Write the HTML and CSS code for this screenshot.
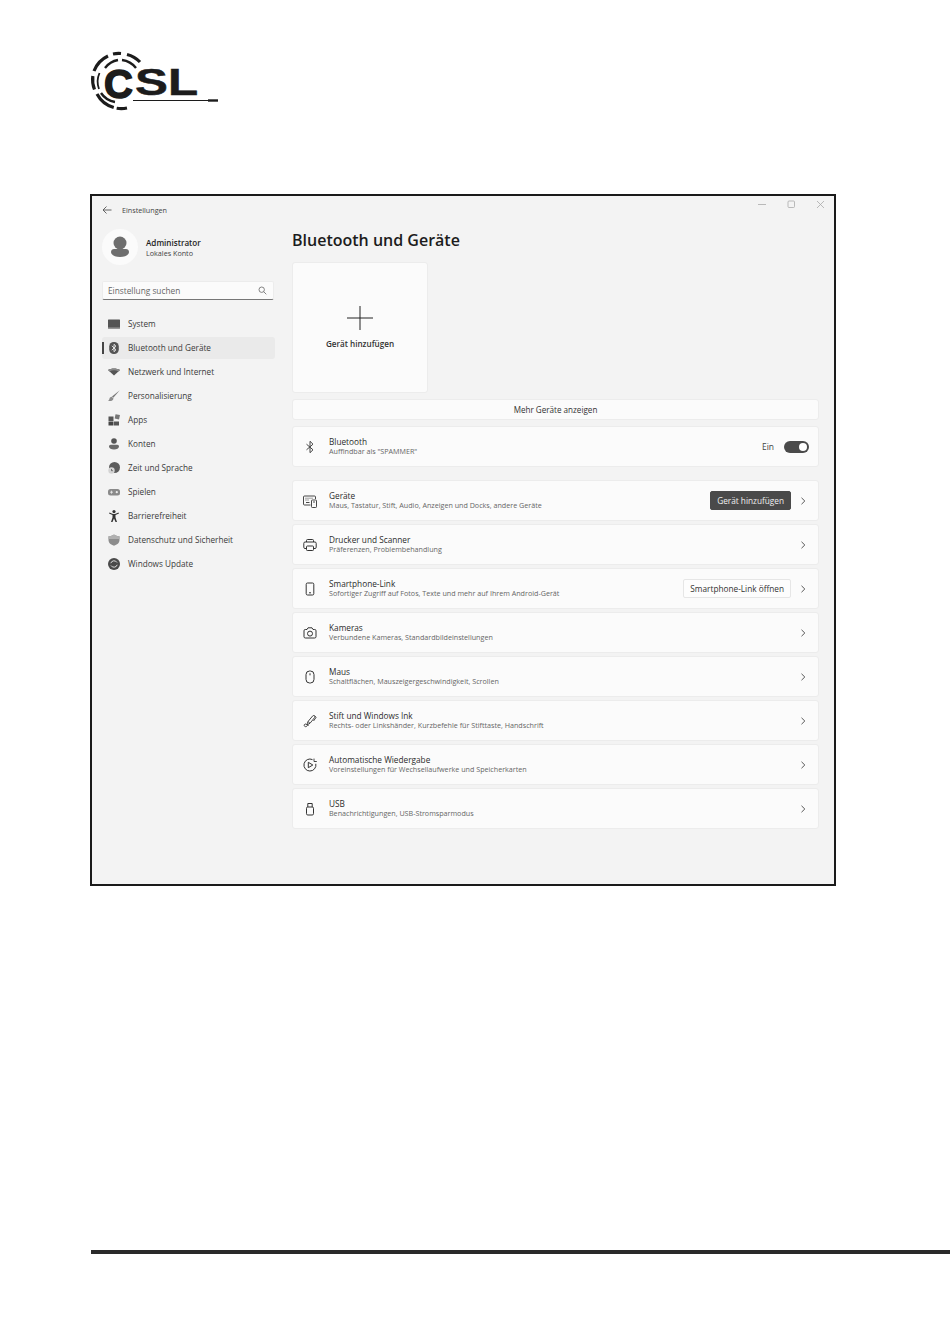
FILE: index.html
```html
<!DOCTYPE html>
<html lang="de">
<head>
<meta charset="UTF-8" />
<meta name="viewport" content="width=device-width, initial-scale=1.0"/>
<title>Bluetooth und Geräte</title>
<link rel="stylesheet" href="styles.css">
</head>

<body>
<div class="page">

  <!-- CSL logo -->
  <svg class="logo" width="130" height="64" viewBox="0 0 130 64">
    <g fill="none" stroke="#1c1c1c">
      <path d="M4.500 40.500A27.500 27.500 0 0 1 2.800 27" stroke-width="3.200"/>
      <path d="M4 22A27.500 27.500 0 0 1 18 7" stroke-width="3.200"/>
      <path d="M23 5A27.500 27.500 0 0 1 31 4.500" stroke-width="3.200"/>
      <path d="M37 5.500A27.500 27.500 0 0 1 50 13" stroke-width="3.200"/>
      <path d="M7 45A27.500 27.500 0 0 0 37 59" stroke-width="3.200" stroke-dasharray="22 3 18 0"/>
      <path d="M15 19A21 21 0 0 1 28 11" stroke-width="2.400"/>
      <path d="M32 11A21 21 0 0 1 46 19" stroke-width="2.400"/>
      <path d="M9 40A21 21 0 0 1 9.500 24" stroke-width="1.800"/>
      <path d="M11 44A21 21 0 0 0 25 53" stroke-width="2.400"/>
    </g>
    <text class="logo-c" x="14" y="48.500">C</text>
    <text class="logo-sl" x="45" y="46" textLength="63" lengthAdjust="spacingAndGlyphs">SL</text>
    <path d="M43 51.500H118" stroke="#1c1c1c" stroke-width="1"/>
    <path d="M118 51.500H128" stroke="#1c1c1c" stroke-width="2.400"/>
  </svg>

  <div class="window">

    <div class="sidebar">
      <div class="appbar">
        <svg width="10" height="10" viewBox="0 0 10 10" class="back"><path d="M9.500 5H1M4.500 1.500 1 5l3.500 3.500" fill="none" stroke="#555" stroke-width="0.900"/></svg>
        <span>Einstellungen</span>
      </div>

      <div class="profile">
        <div class="avatar">
          <svg width="36" height="36" viewBox="0 0 36 36"><circle cx="18" cy="14" r="6.500" fill="#6e6e6e"/><path d="M9 23c0-2 1.500-3 3-3h12c1.500 0 3 1 3 3 0 3-4 5-9 5s-9-2-9-5z" fill="#6e6e6e"/></svg>
        </div>
        <div>
          <div class="profile-name">Administrator</div>
          <div class="profile-sub">Lokales Konto</div>
        </div>
      </div>

      <div class="search">
        <span>Einstellung suchen</span>
        <svg width="9" height="9" viewBox="0 0 9 9"><circle cx="3.700" cy="3.700" r="2.700" fill="none" stroke="#666" stroke-width="0.800"/><path d="M5.700 5.700 8.300 8.300" stroke="#666" stroke-width="0.800"/></svg>
      </div>

      <div class="nav">
        <div class="nav-item">
          <svg width="14" height="14" viewBox="0 0 14 14"><rect x="1" y="2.500" width="12" height="9" rx="0.500" fill="#555"/><rect x="1" y="10.300" width="12" height="1.200" fill="#8a8a8a"/></svg>
          System
        </div>
        <div class="nav-item active">
          <svg width="14" height="14" viewBox="0 0 14 14"><rect x="2.200" y="1" width="9.600" height="12" rx="4.500" fill="#555"/><path d="M4.800 4.800 9 8.800 7 10.700V3.300L9 5.200 4.800 9.200" fill="none" stroke="#fff" stroke-width="0.800"/></svg>
          Bluetooth und Geräte
        </div>
        <div class="nav-item">
          <svg width="14" height="14" viewBox="0 0 14 14"><path d="M1 5C4.500 3 9.500 3 13 5L7 10.500z" fill="#555"/><path d="M1 5C4.500 3 9.500 3 13 5L11.500 6.400C8.700 4.800 5.300 4.800 2.500 6.400z" fill="#8a8a8a"/></svg>
          Netzwerk und Internet
        </div>
        <div class="nav-item">
          <svg width="14" height="14" viewBox="0 0 14 14"><path d="M12.800 1.200 5 7.500l1.300 1.300z" fill="#777"/><path d="M4.800 7.800c-1.600 0-2.200 1-2.400 2.200-.1.800-.8 1.500-1.400 1.700 2.200.8 5 .3 5.500-2.300z" fill="#8c8c8c"/></svg>
          Personalisierung
        </div>
        <div class="nav-item">
          <svg width="14" height="14" viewBox="0 0 14 14"><rect x="1.500" y="3.500" width="5" height="4.500" fill="#555"/><rect x="1.500" y="8.500" width="5" height="4" fill="#444"/><rect x="7" y="8.500" width="5" height="4" fill="#555"/><rect x="8" y="1.500" width="4.500" height="4.500" transform="rotate(12 10 4)" fill="#777"/></svg>
          Apps
        </div>
        <div class="nav-item">
          <svg width="14" height="14" viewBox="0 0 14 14"><circle cx="7" cy="4" r="2.800" fill="#555"/><path d="M2 9.500c0-1 .8-1.700 1.700-1.700h6.600c.9 0 1.700.7 1.700 1.700 0 2-2.300 3-5 3s-5-1-5-3z" fill="#6a6a6a"/></svg>
          Konten
        </div>
        <div class="nav-item">
          <svg width="14" height="14" viewBox="0 0 14 14"><circle cx="7.500" cy="6.500" r="5.500" fill="#5c5c5c"/><circle cx="4.500" cy="9.500" r="3.200" fill="#d4d4d4"/><path d="M4.500 8v1.700h1.400" fill="none" stroke="#444" stroke-width="0.700"/></svg>
          Zeit und Sprache
        </div>
        <div class="nav-item">
          <svg width="14" height="14" viewBox="0 0 14 14"><rect x="1" y="4" width="12" height="6.500" rx="2.500" fill="#8a8a8a"/><circle cx="9.800" cy="7.200" r="1.100" fill="#eee"/><path d="M3 7.200h3M4.500 5.700v3" stroke="#eee" stroke-width="0.800"/></svg>
          Spielen
        </div>
        <div class="nav-item">
          <svg width="14" height="14" viewBox="0 0 14 14"><circle cx="7" cy="2.600" r="1.600" fill="#333"/><path d="M2 4.500 5.500 6v2.500L4 13h1.500L7 9.500 8.500 13H10L8.500 8.500V6L12 4.500l-.5-1L8 5H6L2.500 3.500z" fill="#333"/></svg>
          Barrierefreiheit
        </div>
        <div class="nav-item">
          <svg width="14" height="14" viewBox="0 0 14 14"><path d="M7 1.500c1.500 1.200 3.500 1.800 5.500 1.800V7c0 3-2.500 4.800-5.500 5.700C4 11.800 1.500 10 1.500 7V3.300C3.500 3.300 5.500 2.700 7 1.500z" fill="#8c8c8c"/><path d="M7 1.500c1.500 1.200 3.500 1.800 5.500 1.800V6h-11V3.300C3.500 3.300 5.500 2.700 7 1.500z" fill="#b0b0b0"/></svg>
          Datenschutz und Sicherheit
        </div>
        <div class="nav-item">
          <svg width="14" height="14" viewBox="0 0 14 14"><circle cx="7" cy="7" r="6" fill="#4a4a4a"/><path d="M3.800 6.200A3.400 3.400 0 0 1 10 5.500M10.200 7.800A3.400 3.400 0 0 1 4 8.500" fill="none" stroke="#ddd" stroke-width="1"/></svg>
          Windows Update
        </div>
      </div>
    </div>

    <div class="main">
      <div class="controls">
        <svg width="9" height="9" viewBox="0 0 9 9"><path d="M0 4.500h8" stroke="#aaa" stroke-width="0.800"/></svg>
        <svg width="9" height="9" viewBox="0 0 9 9"><rect x="1" y="1" width="6.500" height="6.500" rx="1" fill="none" stroke="#aaa" stroke-width="0.800"/></svg>
        <svg width="9" height="9" viewBox="0 0 9 9"><path d="M1 1l7 7M8 1 1 8" stroke="#aaa" stroke-width="0.800"/></svg>
      </div>

      <h1>Bluetooth und Geräte</h1>

      <div class="add-card">
        <svg width="26" height="24" viewBox="0 0 26 24"><path d="M0 12h26M13 0v24" stroke="#222" stroke-width="1"/></svg>
        <div class="add-label">Gerät hinzufügen</div>
      </div>

      <div class="more">Mehr Geräte anzeigen</div>

      <div class="row row-bt">
        <svg class="row-icon" width="14" height="14" viewBox="0 0 14 14"><path d="M3.500 4.200 10 9.800 7 12.700V1.300L10 4.200 3.500 9.800" fill="none" stroke="#333" stroke-width="0.900"/></svg>
        <div class="row-text">
          <div class="row-title">Bluetooth</div>
          <div class="row-sub">Auffindbar als "SPAMMER"</div>
        </div>
        <span class="toggle-label">Ein</span>
        <div class="toggle"><div class="knob"></div></div>
      </div>

      <div class="list">
        <div class="row">
          <svg class="row-icon" width="14" height="14" viewBox="0 0 14 14" fill="none" stroke="#333" stroke-width="0.900"><path d="M7.500 11H1.500a1 1 0 0 1-1-1V3a1 1 0 0 1 1-1h10a1 1 0 0 1 1 1v2"/><rect x="8.500" y="6" width="5" height="7.500" rx="0.800"/><path d="M2.500 4.200h7" stroke-dasharray="1 1"/><path d="M2.500 6h4" stroke-dasharray="1 1"/><path d="M3 8.500h3.500"/><path d="M10 8h2M11 10.500v.1"/></svg>
          <div class="row-text">
            <div class="row-title">Geräte</div>
            <div class="row-sub">Maus, Tastatur, Stift, Audio, Anzeigen und Docks, andere Geräte</div>
          </div>
          <div class="btn btn-dark">Gerät hinzufügen</div>
          <svg class="chev" width="6" height="8" viewBox="0 0 6 8"><path d="M1.500 .8 4.800 4 1.500 7.200" fill="none" stroke="#444" stroke-width="0.900"/></svg>
        </div>

        <div class="row">
          <svg class="row-icon" width="14" height="14" viewBox="0 0 14 14" fill="none" stroke="#333" stroke-width="1"><path d="M3.500 4V2.500a1 1 0 0 1 1-1h5a1 1 0 0 1 1 1V4"/><path d="M3.500 10.500H2A1.200 1.200 0 0 1 .8 9.300V5.300A1.300 1.300 0 0 1 2 4h10a1.300 1.300 0 0 1 1.200 1.300v4a1.200 1.200 0 0 1-1.200 1.200h-1.500"/><rect x="3.500" y="8" width="7" height="4.500" rx="0.800"/></svg>
          <div class="row-text">
            <div class="row-title">Drucker und Scanner</div>
            <div class="row-sub">Präferenzen, Problembehandlung</div>
          </div>
          <svg class="chev" width="6" height="8" viewBox="0 0 6 8"><path d="M1.500 .8 4.800 4 1.500 7.200" fill="none" stroke="#444" stroke-width="0.900"/></svg>
        </div>

        <div class="row">
          <svg class="row-icon" width="14" height="14" viewBox="0 0 14 14" fill="none" stroke="#333" stroke-width="1"><rect x="3.200" y="1" width="7.600" height="12" rx="1.300"/><path d="M6 10.800h2"/></svg>
          <div class="row-text">
            <div class="row-title">Smartphone-Link</div>
            <div class="row-sub">Sofortiger Zugriff auf Fotos, Texte und mehr auf Ihrem Android-Gerät</div>
          </div>
          <div class="btn">Smartphone-Link öffnen</div>
          <svg class="chev" width="6" height="8" viewBox="0 0 6 8"><path d="M1.500 .8 4.800 4 1.500 7.200" fill="none" stroke="#444" stroke-width="0.900"/></svg>
        </div>

        <div class="row">
          <svg class="row-icon" width="14" height="14" viewBox="0 0 14 14" fill="none" stroke="#333" stroke-width="1"><path d="M1 4.800A1.300 1.300 0 0 1 2.300 3.500H4L5 1.800h4L10 3.500h1.700A1.300 1.300 0 0 1 13 4.800v6A1.300 1.300 0 0 1 11.700 12H2.300A1.300 1.300 0 0 1 1 10.800z"/><circle cx="7" cy="7.600" r="2.500"/></svg>
          <div class="row-text">
            <div class="row-title">Kameras</div>
            <div class="row-sub">Verbundene Kameras, Standardbildeinstellungen</div>
          </div>
          <svg class="chev" width="6" height="8" viewBox="0 0 6 8"><path d="M1.500 .8 4.800 4 1.500 7.200" fill="none" stroke="#444" stroke-width="0.900"/></svg>
        </div>

        <div class="row">
          <svg class="row-icon" width="14" height="14" viewBox="0 0 14 14" fill="none" stroke="#333" stroke-width="1"><rect x="3" y="1" width="8" height="12" rx="3.600"/><path d="M7 3.300v2"/></svg>
          <div class="row-text">
            <div class="row-title">Maus</div>
            <div class="row-sub">Schaltflächen, Mauszeigergeschwindigkeit, Scrollen</div>
          </div>
          <svg class="chev" width="6" height="8" viewBox="0 0 6 8"><path d="M1.500 .8 4.800 4 1.500 7.200" fill="none" stroke="#444" stroke-width="0.900"/></svg>
        </div>

        <div class="row">
          <svg class="row-icon" width="14" height="14" viewBox="0 0 14 14" fill="none" stroke="#333" stroke-width="0.900"><path d="M5 7.500 9.800 1.800a1.300 1.300 0 0 1 2 1.500L7 9.300z"/><path d="M11.500 1.500 13 3.500 10.500 7"/><path d="M5 7.500 3.800 10.800 7 9.300"/><path d="M3.800 10.800C3 9.300 1 10 1.200 11.500c.2 1.300 2 1.600 2.800.5.500-.7 1-1 1.800-.8"/></svg>
          <div class="row-text">
            <div class="row-title">Stift und Windows Ink</div>
            <div class="row-sub">Rechts- oder Linkshänder, Kurzbefehle für Stifttaste, Handschrift</div>
          </div>
          <svg class="chev" width="6" height="8" viewBox="0 0 6 8"><path d="M1.500 .8 4.800 4 1.500 7.200" fill="none" stroke="#444" stroke-width="0.900"/></svg>
        </div>

        <div class="row">
          <svg class="row-icon" width="14" height="14" viewBox="0 0 14 14" fill="none" stroke="#333" stroke-width="1"><path d="M12.800 5.800A6 6 0 1 1 9.500 1.600"/><path d="M5.300 4.300 9.800 7 5.300 9.700z"/><path d="M11 .6v2.900H13.800" stroke-width="0.900"/></svg>
          <div class="row-text">
            <div class="row-title">Automatische Wiedergabe</div>
            <div class="row-sub">Voreinstellungen für Wechsellaufwerke und Speicherkarten</div>
          </div>
          <svg class="chev" width="6" height="8" viewBox="0 0 6 8"><path d="M1.500 .8 4.800 4 1.500 7.200" fill="none" stroke="#444" stroke-width="0.900"/></svg>
        </div>

        <div class="row">
          <svg class="row-icon" width="14" height="14" viewBox="0 0 14 14" fill="none" stroke="#333" stroke-width="1"><rect x="3.500" y="5" width="7" height="8" rx="1.300"/><path d="M4.800 5V1.500h4.400V5"/></svg>
          <div class="row-text">
            <div class="row-title">USB</div>
            <div class="row-sub">Benachrichtigungen, USB-Stromsparmodus</div>
          </div>
          <svg class="chev" width="6" height="8" viewBox="0 0 6 8"><path d="M1.500 .8 4.800 4 1.500 7.200" fill="none" stroke="#444" stroke-width="0.900"/></svg>
        </div>
      </div>
    </div>

  </div>

  <div class="rule"></div>
</div>
</body>
</html>
```

FILE: styles.css
```css
body {
  margin: 0;
  background-color: white;
  font-family: "Open Sans", "Noto Sans", sans-serif;
  color: #2b2b2b;
}

.page {
  display: flex;
  flex-direction: column;
  min-height: 1339px;
  padding-left: 90px;
  box-sizing: border-box;
}

/* logo */
.logo {
  display: block;
  margin-top: 49px;
  flex-shrink: 0;
}

.logo-c {
  font-family: "Liberation Sans", sans-serif;
  font-weight: bold;
  font-size: 40px;
  fill: #1c1c1c;
  stroke: #1c1c1c;
  stroke-width: 1.5;
}

.logo-sl {
  font-family: "Liberation Sans", sans-serif;
  font-weight: bold;
  font-size: 37px;
  fill: #1c1c1c;
  stroke: #1c1c1c;
  stroke-width: 0.5;
}

/* settings window */
.window {
  display: flex;
  width: 746px;
  height: 692px;
  margin-top: 81px;
  border: 2px solid #1a1a1a;
  background-color: #f3f3f3;
  box-sizing: border-box;
  flex-shrink: 0;
}

.sidebar {
  width: 200px;
  padding-left: 10px;
  box-sizing: border-box;
  flex-shrink: 0;
}

.appbar {
  display: flex;
  align-items: center;
  gap: 10px;
  height: 27px;
  font-size: 7.200px;
  color: #444;
}

.profile {
  display: flex;
  align-items: center;
  gap: 8px;
  height: 36px;
  margin-top: 6px;
}

.avatar {
  width: 36px;
  height: 36px;
  border-radius: 50%;
  background-color: #fbfbfb;
  flex-shrink: 0;
}

.profile-name {
  font-size: 8.100px;
  font-weight: 600;
  line-height: 11px;
  color: #1e1e1e;
}

.profile-sub {
  font-size: 7.200px;
  line-height: 10px;
  color: #444;
}

.search {
  display: flex;
  align-items: center;
  justify-content: space-between;
  width: 172px;
  height: 19px;
  margin-top: 16px;
  padding: 0 6px 1px 5px;
  box-sizing: border-box;
  background-color: #fbfbfb;
  border: 1px solid #ececec;
  border-bottom: 1px solid #777;
  border-radius: 2px;
  font-size: 8.300px;
  color: #666;
}

.nav {
  display: flex;
  flex-direction: column;
  gap: 2px;
  margin-top: 13px;
}

.nav-item {
  position: relative;
  display: flex;
  align-items: center;
  gap: 7px;
  width: 173px;
  height: 22px;
  padding-left: 5px;
  padding-bottom: 1px;
  box-sizing: border-box;
  border-radius: 3px;
  font-size: 8.200px;
  color: #3a3a3a;
}

.nav-item.active {
  background-color: #eaeaea;
}

.nav-item.active::before {
  content: "";
  position: absolute;
  left: 0;
  top: 5px;
  width: 2px;
  height: 12px;
  background-color: #444;
}

/* right column */
.main {
  flex: 1;
  padding-right: 15px;
  min-width: 0;
}

.controls {
  display: flex;
  justify-content: flex-end;
  gap: 20px;
  height: 9px;
  padding-top: 4px;
  margin-right: -6px;
}

h1 {
  margin: 20px 0 0 0;
  font-size: 16px;
  font-weight: 600;
  line-height: 22px;
  color: #1c1c1c;
}

.add-card {
  display: flex;
  flex-direction: column;
  align-items: center;
  width: 136px;
  height: 131px;
  margin-top: 11px;
  padding-top: 43px;
  box-sizing: border-box;
  background-color: #fbfbfb;
  border: 1px solid #ececec;
  border-radius: 3px;
}

.add-label {
  margin-top: 8px;
  font-size: 8.150px;
  font-weight: 600;
  color: #333;
}

.more {
  height: 21px;
  margin-top: 6px;
  box-sizing: border-box;
  background-color: #fbfbfb;
  border: 1px solid #ececec;
  border-radius: 3px;
  font-size: 8.100px;
  line-height: 20px;
  text-align: center;
  color: #333;
}

.row {
  display: flex;
  align-items: center;
  height: 41px;
  padding: 0 12px 0 10px;
  box-sizing: border-box;
  background-color: #fbfbfb;
  border: 1px solid #ececec;
  border-radius: 3px;
}

.row-bt {
  margin-top: 6px;
}

.list {
  display: flex;
  flex-direction: column;
  gap: 3px;
  margin-top: 13px;
}

.row-icon {
  flex-shrink: 0;
}

.row-text {
  flex: 1;
  margin-left: 12px;
  padding-bottom: 1px;
}

.row-title {
  font-size: 8.250px;
  line-height: 11px;
  color: #2b2b2b;
}

.row-sub {
  font-size: 7.170px;
  line-height: 9px;
  color: #666;
}

.toggle-label {
  font-size: 8.500px;
  color: #444;
  margin-right: 10px;
}

.toggle {
  display: flex;
  align-items: center;
  justify-content: flex-end;
  width: 25px;
  height: 12px;
  margin-right: -3px;
  padding-right: 2px;
  box-sizing: border-box;
  border-radius: 6px;
  background-color: #4a4a4a;
}

.knob {
  width: 8px;
  height: 8px;
  border-radius: 50%;
  background-color: white;
}

.btn {
  height: 19px;
  padding: 0 6px;
  box-sizing: border-box;
  background-color: #fdfdfd;
  border: 1px solid #e6e6e6;
  border-radius: 2px;
  font-size: 8.250px;
  line-height: 17px;
  color: #333;
}

.btn-dark {
  background-color: #4a4a4a;
  border-color: #4a4a4a;
  color: #f0f0f0;
}

.chev {
  margin-left: 9px;
  flex-shrink: 0;
}

.rule {
  height: 4px;
  margin-top: auto;
  margin-bottom: 85px;
  margin-left: 1px;
  background-color: #2a2a2a;
}
```
